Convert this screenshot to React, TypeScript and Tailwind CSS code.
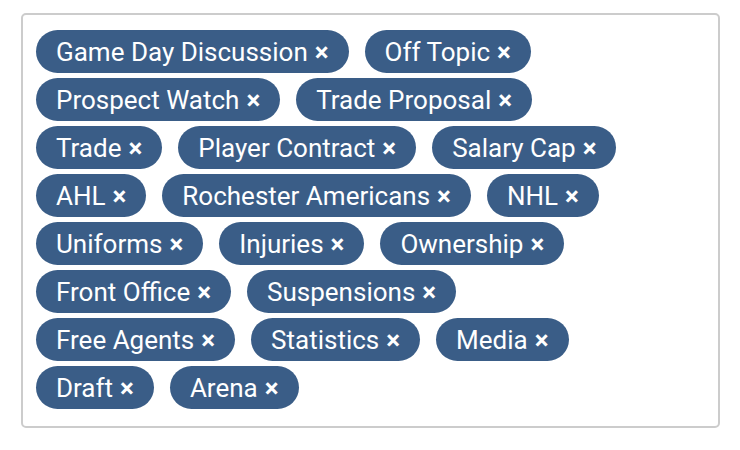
import React, { useState } from "react";

const initialTags = [
  "Game Day Discussion",
  "Off Topic",
  "Prospect Watch",
  "Trade Proposal",
  "Trade",
  "Player Contract",
  "Salary Cap",
  "AHL",
  "Rochester Americans",
  "NHL",
  "Uniforms",
  "Injuries",
  "Ownership",
  "Front Office",
  "Suspensions",
  "Free Agents",
  "Statistics",
  "Media",
  "Draft",
  "Arena",
];

export default function App() {
  const [tags, setTags] = useState<string[]>(initialTags);

  return (
    <div className="w-[740px] h-[450px] bg-white pt-[13px] pl-[21px]" style={{ fontFamily: "Roboto, 'Liberation Sans', sans-serif" }}>
      <div className="w-[699px] h-[415px] border-2 border-[#cccccc] rounded-[5px] pt-[15px] pl-[13px] pr-[13px] pb-[16px]">
        <div className="w-[620px] flex flex-wrap gap-x-4 gap-y-[5px]">
          {tags.map((t) => (
            <span
              key={t}
              className="h-[43px] flex items-center rounded-full bg-[#3a5d87] text-white text-[26px] leading-none pl-5 pr-5"
            >
              {t}
              <button
                onClick={() => setTags(tags.filter((x) => x !== t))}
                className="ml-[7px] text-white font-bold"
              >
                ×
              </button>
            </span>
          ))}
        </div>
      </div>
    </div>
  );
}
